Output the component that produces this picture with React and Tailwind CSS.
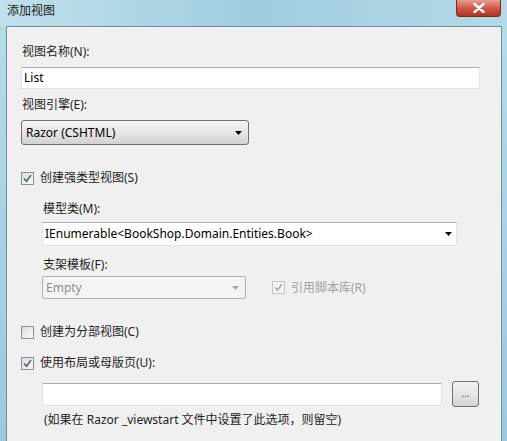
import React from 'react';

const font = "font-['Noto_Sans','Noto_Sans_CJK_SC',sans-serif]";

const Check = ({ checked, disabled }) => (
  <span
    className={`w-[13px] h-[13px] shrink-0 flex items-center justify-center border ${
      disabled ? 'border-[#c4c4c4] bg-[#f4f4f4]' : 'border-[#8e8f8f] bg-gradient-to-br from-[#dcdcdc] to-[#fbfbfb]'
    }`}
  >
    {checked && (
      <svg width="9" height="9" viewBox="0 0 9 9">
        <path
          d="M1 4.5 L3.5 7.2 L8 1"
          fill="none"
          stroke={disabled ? '#a8a8a8' : '#4a5f97'}
          strokeWidth="1.6"
        />
      </svg>
    )}
  </span>
);

const Arrow = ({ color = '#000' }) => (
  <svg width="7" height="4" viewBox="0 0 7 4">
    <path d="M0 0 H7 L3.5 4 Z" fill={color} />
  </svg>
);

const Label = ({ children, className = '' }) => (
  <div className={`h-4 leading-4 text-[12px] text-[#1e1e1e] ${className}`}>{children}</div>
);

export default function App() {
  return (
    <div className={`w-[507px] h-[441px] overflow-hidden flex flex-col bg-gradient-to-b from-[#b7dbe9] via-[#a9d3e4] to-[#9cc9dc] ${font}`}>
      {/* title bar */}
      <div className="h-[26px] shrink-0 flex items-start justify-between pl-[7px] pr-[6px] bg-gradient-to-r from-[#c1e0ec] via-[#9fcde0] to-[#b5d9e7]">
        <span className="pt-[3px] text-[12px] leading-4 text-[#1a1a1a]">添加视图</span>
        <div className="w-[45px] h-[17px] rounded-b-[4px] border border-t-0 border-[#7a2b20] bg-gradient-to-b from-[#e6a093] via-[#d0594a] to-[#b2321f] flex items-center justify-center">
          <svg width="12" height="10" viewBox="0 0 12 10">
            <path d="M1.5 1 L10.5 9 M10.5 1 L1.5 9" stroke="#fff" strokeWidth="2.4" strokeLinecap="round" />
          </svg>
        </div>
      </div>

      {/* client area */}
      <div className="flex-1 ml-[6px] mr-[5px] border border-b-0 border-[#6f8ea2] bg-[#f0f0f0] pl-[14px] pt-[17px]">
        <Label className="pl-[1px]">视图名称(N):</Label>
        <div className="mt-[7px] w-[459px] h-[22px] bg-white border border-[#e2e3ea] border-t-[#abadb3] flex items-center pl-[2px] text-[12px] text-[#000]">
          List
        </div>

        <Label className="mt-[8px] pl-[1px]">视图引擎(E):</Label>
        <div className="mt-[7px] w-[228px] h-[25px] rounded-[3px] border border-[#707070] bg-gradient-to-b from-[#f2f2f2] via-[#e6e6e6] to-[#d2d2d2] flex items-center justify-between pl-[4px] pr-[6px] text-[12px] text-[#000]">
          <span>Razor (CSHTML)</span>
          <Arrow />
        </div>

        <div className="mt-[25px] flex items-center gap-[6px]">
          <Check checked />
          <Label>创建强类型视图(S)</Label>
        </div>

        <div className="pl-[21px]">
          <Label className="mt-[15px] pl-[1px]">模型类(M):</Label>
          <div className="mt-[5px] w-[415px] h-[24px] bg-white border border-[#e2e3ea] border-t-[#abadb3] flex items-center justify-between pl-[2px] pr-[4px] text-[12px] text-[#000]">
            <span>IEnumerable&lt;BookShop.Domain.Entities.Book&gt;</span>
            <Arrow />
          </div>

          <Label className="mt-[11px] pl-[1px]">支架模板(F):</Label>
          <div className="mt-[3px] flex items-center">
            <div className="w-[204px] h-[23px] rounded-[2px] border border-[#adb2b5] bg-[#f4f4f4] flex items-center justify-between pl-[3px] pr-[6px] text-[12px] text-[#8d8d8d]">
              <span>Empty</span>
              <Arrow color="#a6a6a6" />
            </div>
            <div className="ml-[26px] flex items-center gap-[6px]">
              <Check checked disabled />
              <Label className="text-[#a0a0a0]">引用脚本库(R)</Label>
            </div>
          </div>
        </div>

        <div className="mt-[25px] flex items-center gap-[6px]">
          <Check />
          <Label>创建为分部视图(C)</Label>
        </div>

        <div className="mt-[15px] flex items-center gap-[6px]">
          <Check checked />
          <Label>使用布局或母版页(U):</Label>
        </div>

        <div className="pl-[21px]">
          <div className="mt-[10px] flex items-center gap-[10px]">
            <div className="w-[400px] h-[23px] bg-white border border-[#e2e3ea] border-t-[#abadb3]" />
            <div className="w-[27px] h-[26px] rounded-[3px] border border-[#707070] bg-gradient-to-b from-[#f2f2f2] via-[#e6e6e6] to-[#d2d2d2] flex items-center justify-center text-[10px] leading-none text-[#555] pb-[3px]">
              ...
            </div>
          </div>
          <Label className="mt-[5px] pl-[2px]">(如果在 Razor _viewstart 文件中设置了此选项，则留空)</Label>
        </div>
      </div>
    </div>
  );
}
